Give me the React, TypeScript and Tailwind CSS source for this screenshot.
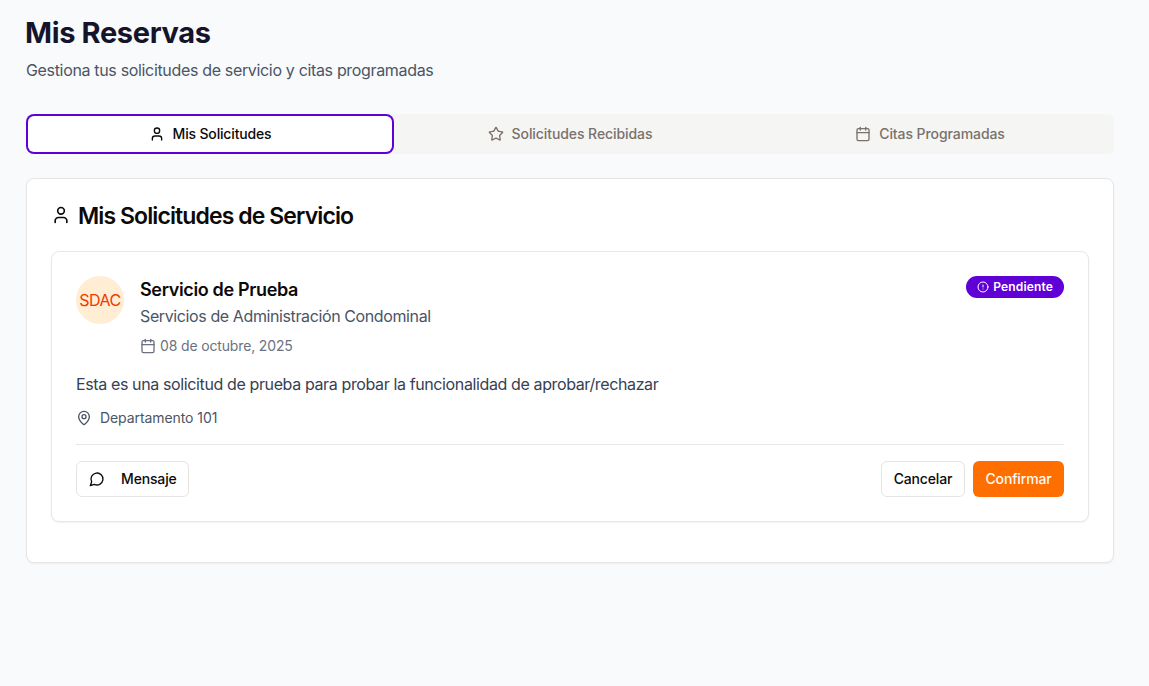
import { Calendar, CircleAlert, MapPin, Star, User } from "lucide-react";

const MessageIcon = () => (
  <svg
    viewBox="0 0 24 24"
    fill="none"
    stroke="currentColor"
    strokeWidth="2"
    strokeLinecap="round"
    strokeLinejoin="round"
    className="mr-4 size-4 shrink-0"
  >
    <path d="M7.9 20A9 9 0 1 0 4 16.1L2 22Z" />
  </svg>
);

export default function App() {
  return (
    <main className="min-h-screen bg-[#f9fafc] pt-[15px] pr-[35px] pl-[26px] font-['Inter',sans-serif] text-[#0c0a09]">
      <header>
        <h1 className="-ml-px text-[29px] leading-9 font-bold tracking-[-0.35px] text-[#14142b]">Mis Reservas</h1>
        <p className="mt-[7px] text-base leading-6 tracking-[-0.335px] text-[#4a5565]">
          Gestiona tus solicitudes de servicio y citas programadas
        </p>
      </header>

      <div role="tablist" className="mt-8 grid h-10 grid-cols-3 rounded-md bg-[#f5f5f4] p-1 text-sm font-medium tracking-[-0.08px] text-[#79716b]">
        <button className="flex items-center justify-center gap-2 rounded-sm bg-white text-[#0c0a09] ring-2 ring-[#5f00d6] ring-offset-2 ring-offset-white">
          <User className="size-4" />
          <span className="tracking-[-0.16px]">Mis Solicitudes</span>
        </button>
        <button className="flex items-center justify-center gap-2">
          <Star className="size-4" />
          <span>Solicitudes Recibidas</span>
        </button>
        <button className="flex items-center justify-center gap-2">
          <Calendar className="size-4" />
          <span>Citas Programadas</span>
        </button>
      </div>

      <section className="mt-6 h-[385px] rounded-lg border border-[#e7e5e4] bg-white p-6 shadow-xs">
        <h2 className="flex h-6 items-center gap-2 text-[23px] font-semibold tracking-[-0.9px]">
          <User className="size-5" />
          <span className="-ml-px pt-0.5">Mis Solicitudes de Servicio</span>
        </h2>

        <article className="mt-6 rounded-lg border border-[#e5e7eb] bg-white p-6 shadow-xs">
          <div className="flex items-start justify-between">
            <div className="flex gap-4">
              <div className="flex size-12 items-center justify-center rounded-full bg-[#ffedd4] text-base tracking-[-0.5px] text-[#f03a00]">
                SDAC
              </div>
              <div>
                <h3 className="text-lg leading-7 font-semibold tracking-[-0.35px]">Servicio de Prueba</h3>
                <p className="text-base leading-6 tracking-[-0.39px] text-[#4a5565]">
                  Servicios de Administración Condominal
                </p>
                <div className="mt-2 flex items-center gap-1 text-sm tracking-[-0.15px] text-[#6a7282]">
                  <Calendar className="size-4" />
                  <span>08 de octubre, 2025</span>
                </div>
              </div>
            </div>
            <div className="flex h-[22px] items-center gap-1 rounded-full bg-[#5f00d6] px-[11px] text-xs font-semibold tracking-[0.16px] text-white">
              <CircleAlert className="size-3" />
              <span>Pendiente</span>
            </div>
          </div>

          <p className="mt-4 text-base leading-6 tracking-[-0.378px] text-[#364153]">
            Esta es una solicitud de prueba para probar la funcionalidad de aprobar/rechazar
          </p>
          <div className="mt-3 flex items-center gap-2 text-sm tracking-[-0.08px] text-[#4a5565]">
            <MapPin className="size-4" />
            <span>Departamento 101</span>
          </div>

          <div className="mt-4 flex items-center justify-between border-t border-[#e5e7eb] pt-4 text-sm font-medium tracking-[-0.15px]">
            <button className="flex h-9 w-[113px] items-center rounded-md border border-[#e7e5e4] bg-white px-3">
              <MessageIcon />
              <span>Mensaje</span>
            </button>
            <div className="flex gap-2">
              <button className="h-9 w-[84px] rounded-md border border-[#e7e5e4] bg-white">Cancelar</button>
              <button className="h-9 w-[91px] rounded-md bg-[#ff6f00] text-[#fafaf9]">Confirmar</button>
            </div>
          </div>
        </article>
      </section>
    </main>
  );
}
